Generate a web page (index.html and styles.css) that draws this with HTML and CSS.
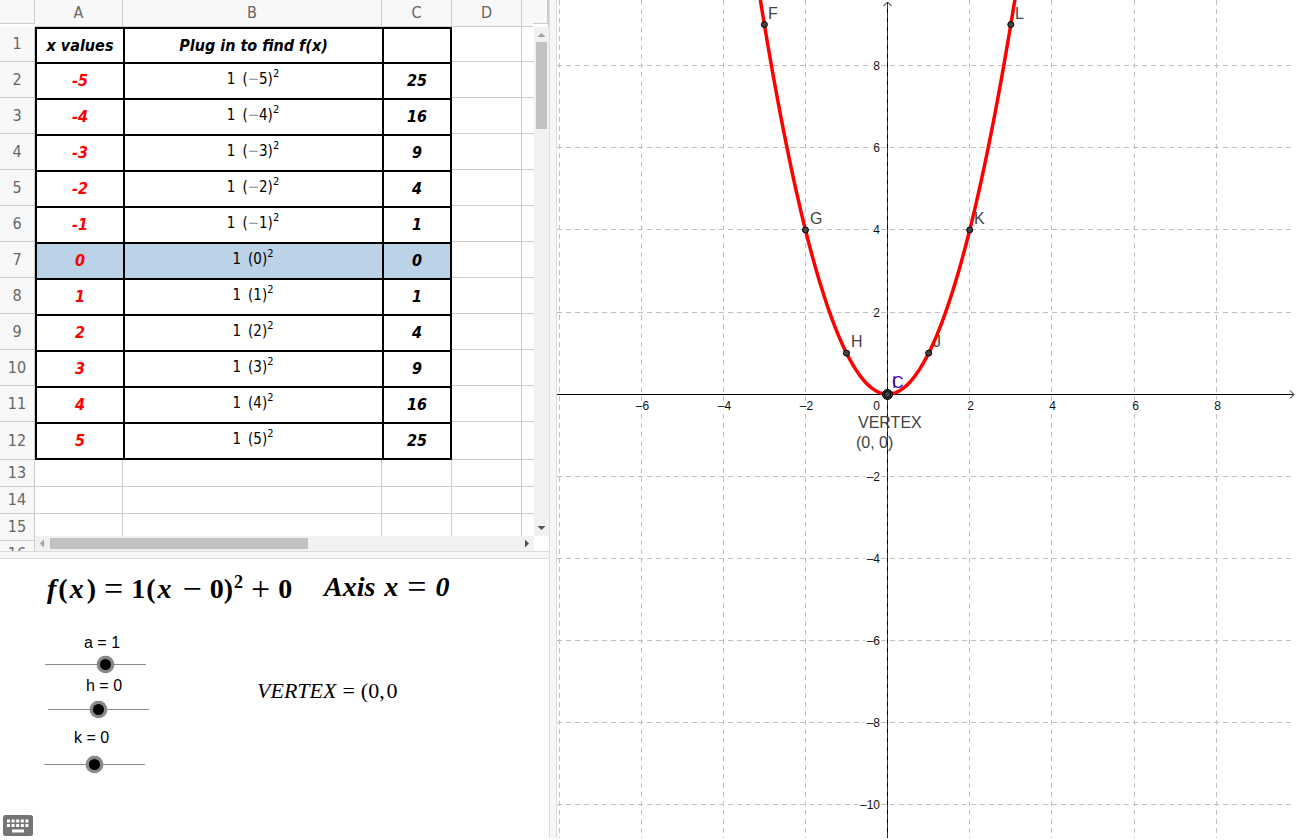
FILE: index.html
```html
<!DOCTYPE html>
<html lang="en">
<head>
<meta charset="utf-8">
<title>Quadratic vertex form</title>
<link rel="stylesheet" href="styles.css">
</head>
<body>
<main class="app">
  <section class="sheet" aria-label="Spreadsheet">
    <table class="grid">
      <colgroup><col class="c-head"><col class="c-a"><col class="c-b"><col class="c-c"><col class="c-d"><col class="c-e"></colgroup>
      <thead>
        <tr><td class="corner"><div class="corner-box"></div></td><th scope="col">A</th><th scope="col">B</th><th scope="col">C</th><th scope="col">D</th><th scope="col"></th></tr>
      </thead>
      <tbody id="rows"></tbody>
    </table>
    <div class="head-end"></div>
    <div class="bar bar-v">
      <svg class="tip" viewBox="0 0 15 15"><path d="M3.500 10h8l-4-4z" fill="#a3a3a3"/></svg>
      <div class="thumb thumb-v"></div>
      <svg class="tip" viewBox="0 0 15 15"><path d="M3.500 5h8l-4 4z" fill="#505050"/></svg>
    </div>
    <div class="bar bar-h">
      <svg class="tip" viewBox="0 0 15 15"><path d="M9 3.500v8l-4-4z" fill="#a3a3a3"/></svg>
      <div class="thumb thumb-h"></div>
      <svg class="tip" viewBox="0 0 15 15"><path d="M6 3.500v8l4-4z" fill="#505050"/></svg>
    </div>
  </section>
  <div class="split split-h"></div>
  <section class="board" aria-label="Controls">
    <div class="formula place-f"><i class="fn">f</i>(<i class="var">x</i>)<span class="op">=</span>1<span class="open">(</span><i class="var">x</i><span class="op">−</span>0)<sup>2</sup><span class="op">+</span>0</div>
    <div class="formula axis place-axis">Axis<span class="word">x</span><span class="op">=</span>0</div>
    <div class="control place-a"><label for="a">a = 1</label><input id="a" type="range" min="-5" max="5" value="1"></div>
    <div class="control place-h"><label for="h">h = 0</label><input id="h" type="range" min="-5" max="5" value="0"></div>
    <div class="control place-k"><label for="k">k = 0</label><input id="k" type="range" min="-5" max="5" value="0"></div>
    <div class="vertex place-v"><i>VERTEX</i><span class="rel">=</span>(0,&#8202;0</div>
    <button class="keyboard" type="button" aria-label="Keyboard">
      <svg viewBox="0 0 30 21" width="30" height="21">
        <rect width="30" height="21" rx="2.500" fill="#757575"/>
        <g fill="#fff">
          <path d="M4 4.500h3v3h-3zM8.600 4.500h3v3h-3zM13.200 4.500h3v3h-3zM17.800 4.500h3v3h-3zM22.400 4.500h3v3h-3z"/>
          <path d="M4 9h3v3h-3zM8.600 9h3v3h-3zM13.200 9h3v3h-3zM17.800 9h3v3h-3zM22.400 9h3v3h-3z"/>
          <path d="M9 14.500h12v3h-12z"/>
        </g>
      </svg>
    </button>
  </section>
  <div class="split split-v"></div>
  <section class="plot" aria-label="Graph">
    <svg id="graph" viewBox="0 0 739 838" preserveAspectRatio="xMinYMin slice">
      <g id="lines" class="lines"></g>
      <path class="axis-line" d="M0 394.500H736M330.500 3V838"/>
      <path class="arrow" d="M733 390.500l4 4l-4 4M326.500 6l4-4l4 4"/>
      <path class="mirror" d="M330.500 4V838"/>
      <g id="ticks" class="ticks"></g>
      <g class="names">
        <text x="211" y="19">F</text><text x="253" y="224">G</text><text x="294" y="347">H</text>
        <text x="376" y="347">J</text><text x="417" y="224">K</text><text x="458" y="19">L</text>
        <text x="335" y="388">I</text>
        <text x="301" y="428">VERTEX</text><text x="299" y="448">(0, 0)</text>
      </g>
      <path id="curve" class="curve"/>
      <g class="names"><text class="blue" x="335" y="388">C</text></g>
      <g id="points" class="points"></g>
      <circle cx="330.500" cy="394.500" r="5" fill="#333" stroke="#000"/>
      <circle cx="330.500" cy="394.500" r="3" fill="#444" stroke="#000"/>
    </svg>
  </section>
</main>
<script src="app.js"></script>
</body>
</html>
```
FILE: styles.css
```css
* { box-sizing: border-box; }
body { margin: 0; background: #fff; font-family: "Liberation Sans", Arial, sans-serif; }

.app {
  display: grid;
  grid-template-columns: minmax(0, 549fr) 8px minmax(0, 739fr);
  grid-template-rows: minmax(0, 551fr) 8px minmax(0, 279fr);
  height: calc(100vh - 2px);
  overflow: hidden;
}
.sheet { grid-area: 1 / 1; position: relative; overflow: hidden; }
.split { background: #f7f7f7; }
.split-h { grid-area: 2 / 1; border-top: 1px solid #dcdcdc; border-bottom: 1px solid #dcdcdc; }
.split-v { grid-area: 1 / 2 / 4 / 3; border-left: 1px solid #dcdcdc; border-right: 1px solid #dcdcdc; }
.board { grid-area: 3 / 1; position: relative; overflow: hidden; }
.plot { grid-area: 1 / 3 / 4 / 4; overflow: hidden; }

/* spreadsheet */
.grid {
  table-layout: fixed;
  width: 100%;
  border-spacing: 0;
  font: 16px/18px "DejaVu Sans Condensed", "DejaVu Sans", sans-serif;
  text-align: center;
}
.c-head { width: 35px; }
.c-a { width: 88px; }
.c-b { width: 259px; }
.c-c, .c-d { width: 70px; }
.grid th, .grid td { padding: 0; border: 0 solid #ccc; border-width: 0 1px 1px 0; }
.grid th { background: #f8f8f8; color: #666; font-weight: 400; }
.grid thead tr { height: 27px; }
.grid .corner { border: 0; vertical-align: top; }
.corner-box { height: 24px; background: #f8f8f8; border: solid #ccc; border-width: 0 1px 1px 0; }
.grid tbody tr { height: 27px; }
.grid tbody .first { height: 35px; }
.grid tbody .data { height: 36px; }
.grid tbody .last { height: 38px; }
.grid td.box { border-color: #000; border-width: 2px 0 0 2px; font-weight: 700; font-style: italic; }
.grid td.box.c { border-right-width: 2px; }
.grid .last td.box { border-bottom-width: 2px; }
.grid td.red { color: #f00; }
.grid .picked td.box { background: #bcd2e6; }
.grid td.box.math { font-weight: 400; font-style: normal; font-size: 15px; padding: 0 1px 4px 0; }
.math .arg { margin-left: 7px; }
.math .minus { color: #999; }
.math sup { font-size: 11px; line-height: 0; vertical-align: 7px; }

.head-end {
  position: absolute; top: 0; right: 1px; width: 15px; height: 24px;
  background: #f8f8f8; border: solid #ccc; border-width: 0 1px 1px 0;
  box-shadow: 0 3px 0 #fff;
}
.bar { position: absolute; display: flex; background: #f1f1f1; }
.bar-v { top: 27px; right: 0; bottom: 15px; width: 15px; flex-direction: column; justify-content: space-between; }
.bar-h { left: 35px; right: 15px; bottom: 0; height: 15px; justify-content: space-between; box-shadow: 15px 0 0 #fff; }
.tip { width: 15px; height: 15px; flex: none; }
.thumb { background: #c1c1c1; }
.thumb-v { width: 11px; height: 87px; margin: 0 2px auto; }
.thumb-h { width: 258px; height: 11px; margin: 2px auto 2px 0; }

/* free canvas of formulas and sliders */
.formula, .vertex, .control, .keyboard { position: absolute; white-space: nowrap; }
.formula { font: 700 28px/32px "Liberation Serif", "Times New Roman", serif; }
.formula .fn { margin-right: 2px; }
.formula .var { margin: 0 3px 0 2px; }
.formula .op { font-size: 34px; font-weight: 400; font-style: normal; line-height: 0; margin: 0 8px; vertical-align: -2px; }
.formula .open { margin-left: 1px; }
.formula sup { font-size: 18px; line-height: 0; vertical-align: 10px; margin-left: 1px; }
.formula.axis { font-style: italic; }
.axis .word { margin-left: 9px; }
.formula.axis .op { margin: 0 9px; }
.vertex { font: 22px/26px "Liberation Serif", "Times New Roman", serif; }
.vertex .rel { margin: 0 6px; }
.place-f { left: 47px; top: 14px; }
.place-axis { left: 324px; top: 12px; }
.place-v { left: 257px; top: 119px; }
.place-a { left: 37px; top: 75px; }
.place-h { left: 40px; top: 118px; }
.place-k { left: 36px; top: 170px; }

.control { display: flex; flex-direction: column; width: 117px; gap: 4px; font-size: 16px; line-height: 18px; }
.control label { padding-left: 47px; }
.place-h label { padding-left: 46px; }
.place-k label { padding-left: 38px; }
.place-h { gap: 6px; }
.place-k { gap: 9px; }
.control input {
  appearance: none; display: block; width: 100%; height: 17px; margin: 0;
  background: linear-gradient(#8c8c8c, #8c8c8c) center / calc(100% - 16px) 1px no-repeat;
}
.control input::-webkit-slider-thumb {
  appearance: none; width: 17px; height: 17px; border-radius: 50%;
  background: #000; border: 3px solid #888; box-shadow: 0 0 1px #444;
}
.keyboard { left: 3px; bottom: 2px; padding: 0; border: 0; background: none; }
.keyboard svg { display: block; }

/* graph */
#graph { display: block; width: 100%; height: 100%; }
.lines { stroke: #c0c0c0; stroke-dasharray: 5 4; }
.axis-line { fill: none; stroke: #000; shape-rendering: crispEdges; }
.arrow { fill: none; stroke: #000; }
.mirror { fill: none; stroke: #60c; stroke-dasharray: 5 4; }
.ticks { font-size: 12px; fill: #111; paint-order: stroke; stroke: #fff; stroke-width: 3px; }
.names { font-size: 16px; fill: #444; }
.blue { fill: #40b; }
.curve { fill: none; stroke: #f00; stroke-width: 3.5px; }
.points { fill: #444; stroke: #000; }
```
FILE: app.js
```javascript
const rows = document.getElementById("rows");
let html = "";
for (let r = 1; r <= 16; r++) {
  const x = r - 7;
  const cls = r === 1 ? "first" : r === 12 ? "last" : r < 12 ? "data" : "";
  html += `<tr class="${cls}${r === 7 ? " picked" : ""}"><th scope="row">${r}</th>`;
  if (r === 1) {
    html += '<td class="box">x values</td><td class="box">Plug in to find f(x)</td><td class="box c"></td>';
  } else if (r <= 12) {
    const arg = (x < 0 ? '<span class="minus">−</span>' : "") + Math.abs(x);
    html += `<td class="box red">${x}</td><td class="box math">1<span class="arg">(${arg})</span><sup>2</sup></td><td class="box c">${x * x}</td>`;
  } else {
    html += "<td></td><td></td><td></td>";
  }
  html += "<td></td><td></td></tr>";
}
rows.innerHTML = html;

const unit = 41.07, ox = 330.6, oy = 394.2;
const px = n => Math.floor(ox + n * unit) + 0.5;
const py = n => Math.floor(oy - n * unit) + 0.5;
const label = n => (n < 0 ? "–" : "") + Math.abs(n);
let lines = "", ticks = "";
for (let n = -8; n <= 8; n += 2) {
  if (n === 0) continue;
  lines += `<path d="M${px(n)} 0V838"/>`;
  if (n > -8) ticks += `<text x="${px(n) + 1}" y="410" text-anchor="middle">${label(n)}</text>`;
}
for (let n = -10; n <= 8; n += 2) {
  if (n === 0) continue;
  lines += `<path d="M0 ${py(n)}H735"/>`;
  ticks += `<text x="323" y="${py(n) + 4.5}" text-anchor="end">${label(n)}</text>`;
}
ticks += '<text x="323" y="410" text-anchor="end">0</text>';
document.getElementById("lines").innerHTML = lines;
document.getElementById("ticks").innerHTML = ticks;

let d = "";
for (let x = -3.2; x <= 3.2; x += 0.05) {
  d += (d ? "L" : "M") + (ox + x * unit).toFixed(2) + " " + (oy - x * x * unit).toFixed(2);
}
document.getElementById("curve").setAttribute("d", d);
document.getElementById("points").innerHTML = [-3, -2, -1, 1, 2, 3]
  .map(x => `<circle cx="${ox + x * unit}" cy="${oy - x * x * unit}" r="3"/>`).join("");
```
